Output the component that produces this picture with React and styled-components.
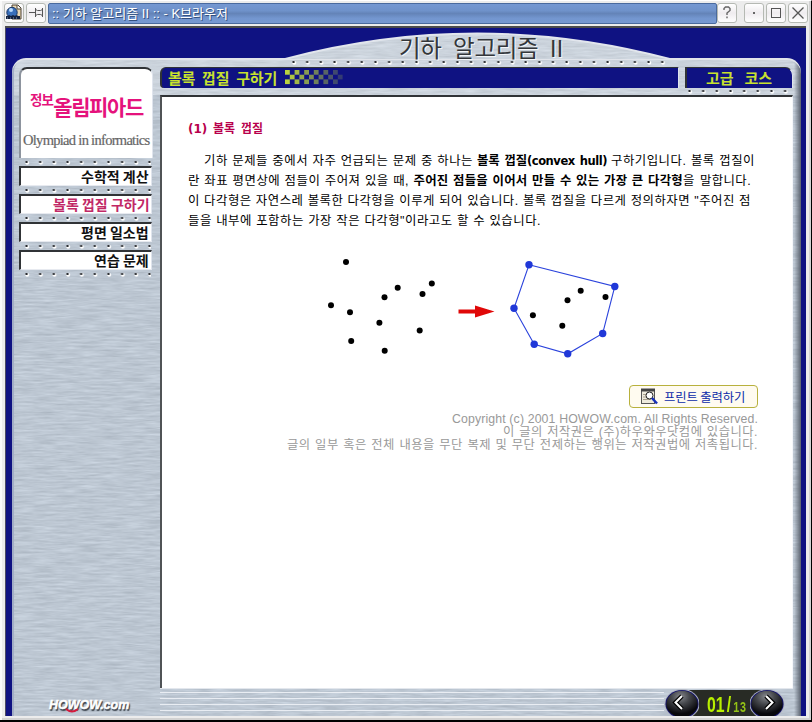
import React from "react";
import styled, { createGlobalStyle, css } from "styled-components";

const NAVY = "#0f1282";
const METAL_NOISE =
  "url(\"data:image/svg+xml,%3Csvg xmlns='http://www.w3.org/2000/svg' width='400' height='400'%3E%3Cfilter id='n' x='0' y='0' width='100%25' height='100%25' color-interpolation-filters='sRGB'%3E%3CfeTurbulence type='fractalNoise' baseFrequency='.045 .5' numOctaves='3' stitchTiles='stitch'/%3E%3CfeColorMatrix values='.16 0 0 0 .66 .16 0 0 0 .7 .16 0 0 0 .745 0 0 0 0 1'/%3E%3C/filter%3E%3Crect width='400' height='400' filter='url(%23n)'/%3E%3C/svg%3E\")";

const Global = createGlobalStyle`
  * { box-sizing: border-box; }
  body { margin: 0; font-family: "Liberation Sans", "Noto Sans CJK KR", sans-serif; }
`;

const Window = styled.div`
  width: 812px;
  height: 722px;
  overflow: hidden;
  display: grid;
  grid-template-rows: 25px 690px;
  background: #ececec;
  border-top: 1px solid #fff;
  border-right: 1px solid #000;
  border-bottom: 2px solid #000;
  box-shadow: inset 2px 0 #fafafa, inset -2px -2px #d2d2d2;
`;

const TitleBar = styled.header`
  display: flex;
  align-items: center;
  padding: 0 3px 2px 4px;
`;

const WinButton = styled.span`
  width: 20px;
  height: 20px;
  flex: none;
  margin-left: ${(p) => p.$gap || 0}px;
  border: 1px solid #b5b9b3;
  border-radius: 3px;
  background: linear-gradient(#fff, #efecef 50%, #fff);
  display: grid;
  place-items: center;
  svg { display: block; }
`;

const Caption = styled.div`
  width: 669px;
  height: 21px;
  margin: 1px 0 0 2px;
  padding-left: 3px;
  border: 1px solid #4a6a9e;
  border-radius: 2px;
  background: linear-gradient(#7598d2, #6f92ca 35%, #6484b8 50%, #7396cf 75%, #7799d2);
  color: #fff;
  font-size: 13px;
  line-height: 19px;
  text-shadow: 1px 1px #33507f;
`;

const Line = styled.div`
  width: ${(p) => p.$w}px;
  letter-spacing: ${(p) => p.$ls || 0}px;
  white-space: nowrap;
  text-align: justify;
  text-align-last: justify;
`;

const Page = styled.div`
  margin-left: 5px;
  width: 801px;
  height: 690px;
  border-top: 2px solid #4c4c4c;
  border-left: 1px solid #4c4c60;
  background: ${NAVY};
  display: flex;
  flex-direction: column;
  overflow: hidden;
`;

const Dome = styled.div`
  height: 30px;
  flex: none;
  padding-left: 279px;
  display: flex;
  position: relative;
`;
const DomeShape = styled.div`
  width: 385px;
  height: 31px;
  flex: none;
  background: linear-gradient(#ffffff38, #ffffff38), ${METAL_NOISE};
  clip-path: path("M0 31 Q192 -20 385 31 Z");
`;
const DomeEdge = styled.svg`
  position: absolute;
  left: 279px;
  top: 0;
`;
const DomeTitle = styled.div`
  position: absolute;
  z-index: 1;
  left: 393px;
  top: 2px;
  font: 400 23.5px/34px "Noto Sans CJK KR", sans-serif;
  color: #33363a;
  text-shadow: 1px 1px #f4f6f8;
`;

const Frame = styled.main`
  margin-left: 6px;
  width: 789px;
  flex: 1;
  border-radius: 14px 14px 0 0;
  background:
    linear-gradient(90deg, #8e98a500 782px, #59616e 789px),
    linear-gradient(#ffffff38, #ffffff38) 0 0 / 100% 37px no-repeat,
    ${METAL_NOISE};
  box-shadow: inset 0 2px #e1e4ea, inset 2px 0 #a3aec6;
  padding: 9px 7px 0 7px;
  display: grid;
  grid-template-columns: 134px 633px;
  column-gap: 7px;
`;

const inset = css`
  border-top: 2px solid #303336;
  border-left: 2px solid #303336;
  border-right: 1px solid #dfe4ed;
  border-bottom: 1px solid #e7eaf0;
`;

const Sidebar = styled.aside`
  display: flex;
  flex-direction: column;
`;

const LogoBox = styled.div`
  height: 91px;
  border-top: 2px solid #303336;
  border-left: 2px solid #8d949e;
  border-right: 1px solid #dfe4ed;
  border-radius: 8px 8px 0 0;
  background: #fff;
  padding: 18px 0 0 3px;
  display: flex;
  flex-direction: column;
`;
const LogoTop = styled.div`
  height: 42px;
  padding-left: 6px;
  display: flex;
  color: #e5127c;
  font-family: "Noto Sans CJK KR", sans-serif;
  font-weight: 700;
  white-space: nowrap;
`;
const LogoSmall = styled.span`
  font-size: 13.5px;
  line-height: 25px;
  letter-spacing: -0.8px;
`;
const LogoBig = styled.span`
  font-size: 21px;
  line-height: 39px;
  letter-spacing: -1.4px;
`;
const LogoSub = styled.div`
  margin-left: -1px;
  font: 14.5px/22px "Liberation Serif", serif;
  color: #666;
  letter-spacing: -0.7px;
  -webkit-text-stroke: 0.2px #666;
  white-space: nowrap;
`;

const Rivets = styled.div`
  height: ${(p) => p.$h || 8}px;
  margin-left: ${(p) => p.$left || 0}px;
  width: ${(p) => p.$w}px;
  background:
    radial-gradient(circle at 1.5px 1px, #26292e 0, #26292e 0.8px, #26292e00 1.5px) 0 ${(p) => p.$y || 3}px / 13.67px 5px repeat-x,
    radial-gradient(circle at 2.2px 1.8px, #fff 0, #fff 1.4px, #fff0 2.4px) 0 ${(p) => p.$y || 3}px / 13.67px 5px repeat-x;
`;
const DomeRivets = styled(Rivets)`
  position: absolute;
  left: 286px;
  top: 30px;
  z-index: 1;
`;

const NavItem = styled.a`
  height: 20px;
  width: 133px;
  ${inset}
  background: #fff;
  color: ${(p) => (p.$active ? "#c12866" : "#111")};
  font: 700 14px/16px "Noto Sans CJK KR", sans-serif;
  padding-right: 4px;
  display: flex;
  justify-content: flex-end;
`;

const Main = styled.section`
  display: grid;
  grid-template-rows: 21px 7px 593px 28px;
`;

const Tabs = styled.div`
  display: grid;
  grid-template-columns: 519px 108px;
  column-gap: 6px;
`;
const Tab = styled.div`
  background: ${NAVY};
  border-top: 1px solid #303336;
  border-left: 2px solid #303336;
  border-right: 1px solid #dfe4ed;
  border-radius: ${(p) => (p.$end ? "0 8px 0 0" : "6px 0 0 4px")};
  color: #c8e22e;
  font: 700 15px/17px "Noto Sans CJK KR", sans-serif;
  display: flex;
  align-items: center;
  padding: 0 0 2px ${(p) => (p.$end ? 19 : 6)}px;
  white-space: nowrap;
`;
const Checker = styled.svg`
  margin: 1px 0 0 8px;
`;

const Content = styled.article`
  background: #fff;
  border-top: 2px solid #303336;
  border-left: 2px solid #505356;
  border-right: 1px solid #f4f6fa;
  padding: 22px 34px 0 26px;
  font: 12.4px/20px "Liberation Sans", "Noto Sans CJK KR", sans-serif;
  color: #000;
  display: flex;
  flex-direction: column;
`;
const Heading = styled.h1`
  margin: 0 0 12px;
  font: 700 12px/20px "DejaVu Sans", "Noto Sans CJK KR", sans-serif;
  color: #b8004c;
`;
const Para = styled.div`
  display: flex;
  flex-direction: column;
`;
const Row = styled.div`
  display: flex;
  gap: ${(p) => p.$gap || 0}px;
  padding-left: ${(p) => p.$indent || 0}px;
  height: 20px;
`;
const BoldLine = styled(Line)`
  font-weight: 700;
`;
const Latin = styled.span`
  font: 700 11.5px/20px "DejaVu Sans", sans-serif;
  letter-spacing: -0.45px;
`;
const Figure = styled.svg`
  margin: 16px 0 0 130px;
  flex: none;
`;
const PrintButton = styled.button`
  align-self: flex-end;
  margin-top: 23px;
  width: 129px;
  height: 23px;
  flex: none;
  border: 1px solid #b8b13d;
  border-radius: 4px;
  background: #fffbf0;
  color: #0a2aa8;
  padding: 0 0 0 11px;
  display: flex;
  align-items: center;
  gap: 6px;
  font: 12.3px/20px "Noto Sans CJK KR", sans-serif;
`;
const Legal = styled.footer`
  align-self: flex-end;
  margin-top: 5px;
  display: flex;
  flex-direction: column;
  align-items: flex-end;
  color: #999;
  font: 12.3px/12.8px "Liberation Sans", "Noto Sans CJK KR", sans-serif;
`;

const Brand = styled.div`
  margin: auto 0 3px 30px;
  position: relative;
  color: #fff;
  font: italic 700 12.5px/16px "Liberation Sans", sans-serif;
  letter-spacing: 0;
  -webkit-text-stroke: 0.5px #fff;
  text-shadow: 1px 1px 1px #3e4650, 1px 2px 1px #3e4650;
  white-space: nowrap;
`;
const Smile = styled.svg`
  position: absolute;
  left: 16px;
  top: 11px;
`;
const Bottom = styled.div`
  display: flex;
  border-top: 1px solid #e3e7ed;
`;
const Grooves = styled.div`
  width: 504px;
  margin-top: 3px;
  background: repeating-linear-gradient(#e9edf3 0 1px, transparent 1px 6px);
`;
const Pager = styled.div`
  display: grid;
  grid-template-columns: 35px 51px 36px;
`;
const Counter = styled.div`
  background: #282b25;
  margin-top: 1px;
  padding-left: 8px;
  display: flex;
  color: #b8f000;
  font: 700 22px/29px "Liberation Sans", sans-serif;
`;
const Condensed = styled.span`
  display: block;
  width: 42px;
  flex: none;
  transform: scaleX(0.72);
  transform-origin: 0 0;
  white-space: nowrap;
`;
const Slash = styled.span`
  margin-left: 3px;
`;
const Total = styled.span`
  margin-left: 3px;
  font-size: 15px;
  color: #93c116;
  letter-spacing: 0.8px;
`;
const Round = styled.svg`
  display: block;
`;

const NAV = [["수학적 계산", 66], ["볼록 껍질 구하기", 94], ["평면 일소법", 66], ["연습 문제", 53]];
const CLOUD = [[346, 262], [331, 305.3], [350, 312.3], [384.5, 297.3], [397.7, 287.7], [422.5, 294], [431.8, 283.5], [379.4, 322.7], [419.7, 330.4], [351.2, 341], [384.7, 350.8]];
const INNER = [[532.9, 315.3], [567.5, 300.3], [580.7, 290.7], [605.5, 297], [562.3, 325.7]];
const HULL = [[529, 264.8], [614.8, 286.5], [602.7, 333.5], [567.7, 353.8], [534.2, 344.2], [514, 308.3]];

function Arrow({ dir }) {
  const id = `ball${dir}`;
  const cx = dir === "l" ? 18 : 17;
  const d = dir === "l" ? "M18 7L11.5 13.5L18 20" : "M16 7L22.5 13.5L16 20";
  return (
    <Round width="36" height="28" viewBox="0 0 36 28">
      <defs>
        <radialGradient id={id} cx="45%" cy="22%" r="65%">
          <stop offset="0" stopColor="#85878d" />
          <stop offset=".45" stopColor="#44464b" />
          <stop offset="1" stopColor="#08080c" />
        </radialGradient>
      </defs>
      <rect x={dir === "l" ? 18 : 0} y="1" width="18" height="27" fill="#282b25" />
      <ellipse cx={cx} cy="15" rx="17.6" ry="15" fill="#b5bac4" />
      <ellipse cx={cx} cy="15" rx="16.6" ry="14" fill="#15156b" />
      <ellipse cx={cx} cy="15" rx="15.7" ry="13.2" fill={`url(#${id})`} />
      <path d={d} fill="none" stroke="#000" strokeWidth="4.5" />
      <path d={d} fill="none" stroke="#fff" strokeWidth="2" />
    </Round>
  );
}

export default function App() {
  return (
    <>
      <Global />
      <Window>
        <TitleBar>
          <WinButton>
            <svg width="18" height="18" viewBox="0 0 18 18">
              <path d="M7 1h6l3 3v11H7z" fill="#e9d7b4" stroke="#4b4031" />
              <path d="M12 1v4h4" fill="#fff" stroke="#4b4031" />
              <circle cx="7" cy="8.5" r="5.2" fill="#3970bb" stroke="#183663" />
              <circle cx="6" cy="6" r="2" fill="#b9d9fb" />
              <path d="M1 12l2 0 1-1 2 1 2-1 2 1 2-1 1 1 2 0v3H1z" fill="#14233f" />
              <path d="M2 14h12" stroke="#8fa0bc" strokeDasharray="1 2" />
            </svg>
          </WinButton>
          <WinButton $gap={2}>
            <svg width="16" height="14" viewBox="0 0 16 14" fill="none" stroke="#555">
              <path d="M1 6.5h6M7.5 2v9M7.5 3.5l2 1h3l2-1M7.5 9.500l2-1h3l2 1M14.500 2v9" />
            </svg>
          </WinButton>
          <Caption><Line $w={175} $ls={0}>:: 기하 알고리즘 II :: - K브라우저</Line></Caption>
          <WinButton $gap={0}>
            <svg width="10" height="13" viewBox="0 0 10 13" fill="none" stroke="#666" strokeWidth="1.4">
              <path d="M2 4V2.500L3.500 1h3L8 2.500v2L5 7v2M5 10.500v1.800" />
            </svg>
          </WinButton>
          <WinButton $gap={7}><svg width="4" height="4"><rect x="1" y="1" width="2" height="2" fill="#666" /></svg></WinButton>
          <WinButton $gap={2}><svg width="12" height="12"><rect x="1.500" y="1.500" width="9" height="9" fill="none" stroke="#555" /></svg></WinButton>
          <WinButton $gap={2}><svg width="14" height="14"><path d="M1.500 1.500l11 11M12.500 1.500l-11 11" stroke="#555" strokeWidth="1.300" /></svg></WinButton>
        </TitleBar>
        <Page>
          <Dome>
            <DomeShape />
            <DomeEdge width="385" height="31"><path d="M0 31Q192 -20 385 31" fill="none" stroke="#e2e6ed" strokeWidth="2" /></DomeEdge>
            <DomeTitle><Line $w={164} $ls={-0.3}>기하 알고리즘 II</Line></DomeTitle>
            <DomeRivets $w={378} $y={3} />
          </Dome>
          <Frame>
            <Sidebar>
              <LogoBox>
                <LogoTop><LogoSmall>정보</LogoSmall><LogoBig>올림피아드</LogoBig></LogoTop>
                <LogoSub>Olympiad in informatics</LogoSub>
              </LogoBox>
              {NAV.map(([t, w], i) => (
                <React.Fragment key={t}>
                  <Rivets $w={126} $left={6} />
                  <NavItem $active={i === 1}><Line $w={w}>{t}</Line></NavItem>
                </React.Fragment>
              ))}
              <Rivets $w={126} $left={6} />
              <Brand>
                HOWOW.com
                <Smile width="14" height="6"><path d="M1 1q6 5 12 0" fill="none" stroke="#d41a3c" strokeWidth="2" /></Smile>
              </Brand>
            </Sidebar>
            <Main>
              <Tabs>
                <Tab>
                  <Line $w={109} $ls={-0.2}>볼록 껍질 구하기</Line>
                  <Checker width="60" height="15">
                    {Array.from({ length: 12 }, (_, c) => [0, 1, 2].map((r) => (c + r) % 2 === 0 && (
                      <rect key={`${c}${r}`} x={c * 4.8} y={r * 4.700} width="4.8" height="4.700" fill="#c4dd3b" opacity={0.95 - c * 0.068} />
                    )))}
                  </Checker>
                </Tab>
                <Tab $end><Line $w={66} $ls={0}>고급 코스</Line></Tab>
              </Tabs>
              <Rivets $h={7} $w={104} $left={528} $y={2} />
              <Content>
                <Heading><Line $w={75} $ls={0}>(1) 볼록 껍질</Line></Heading>
                <Para>
                  <Row $indent={16} $gap={4}>
                    <Line $w={269} $ls={0.5}>기하 문제들 중에서 자주 언급되는 문제 중 하나는</Line>
                    <BoldLine $w={130} $ls={-0.1}>볼록 껍질<Latin>(convex hull)</Latin></BoldLine>
                    <Line $w={144} $ls={0.5}>구하기입니다. 볼록 껍질이</Line>
                  </Row>
                  <Row>
                    <Line $w={221} $ls={0.5}>란 좌표 평면상에 점들이 주어져 있을 때,</Line>
                    <BoldLine $w={274} $ls={0.25}>&nbsp;주어진 점들을 이어서 만들 수 있는 가장 큰 다각형</BoldLine>
                    <Line $w={68} $ls={0.4}>을 말합니다.</Line>
                  </Row>
                  <Row><Line $w={563} $ls={0.5}>이 다각형은 자연스레 볼록한 다각형을 이루게 되어 있습니다. 볼록 껍질을 다르게 정의하자면 "주어진 점</Line></Row>
                  <Row><Line $w={353} $ls={0.5}>들을 내부에 포함하는 가장 작은 다각형"이라고도 할 수 있습니다.</Line></Row>
                </Para>
                <Figure width="310" height="115" viewBox="318 247 310 115">
                  {CLOUD.map(([x, y]) => <circle key={`${x}`} cx={x} cy={y} r="3" />)}
                  <path d="M458.500 309.500H475V305.500L494.500 311.500L475 317.500V313.500H458.500Z" fill="#e00808" />
                  <polygon points={HULL.map((p) => p.join(",")).join(" ")} fill="none" stroke="#2b43dc" strokeWidth="1.100" />
                  {HULL.map(([x, y]) => <circle key={`${x}`} cx={x} cy={y} r="3.700" fill="#2038d8" />)}
                  {INNER.map(([x, y]) => <circle key={`${x}`} cx={x} cy={y} r="3" />)}
                </Figure>
                <PrintButton>
                  <svg width="17" height="17" viewBox="0 0 17 17">
                    <rect x=".5" y="1.500" width="13" height="14" fill="#eeeadd" stroke="#555" />
                    <path d="M0 2h14" stroke="#444" strokeWidth="3" />
                    <path d="M2 6.500h3M2 9h4M2 11.500h8" stroke="#aaa18e" />
                    <circle cx="8.500" cy="7.500" r="3.500" fill="#fff" stroke="#222" />
                    <path d="M11 10l5 5.500" stroke="#1630ba" strokeWidth="2.500" />
                  </svg>
                  <Line $w={80} $ls={-0.1}>프린트 출력하기</Line>
                </PrintButton>
                <Legal>
                  <Line $w={306} $ls={0.13}>Copyright (c) 2001 HOWOW.com. All Rights Reserved.</Line>
                  <Line $w={255} $ls={0.5}>이 글의 저작권은 (주)하우와우닷컴에 있습니다.</Line>
                  <Line $w={471} $ls={0.5}>글의 일부 혹은 전체 내용을 무단 복제 및 무단 전제하는 행위는 저작권법에 저촉됩니다.</Line>
                </Legal>
              </Content>
              <Bottom>
                <Grooves />
                <Pager>
                  <Arrow dir="l" />
                  <Counter><Condensed>01<Slash>/</Slash><Total>13</Total></Condensed></Counter>
                  <Arrow dir="r" />
                </Pager>
              </Bottom>
            </Main>
          </Frame>
        </Page>
      </Window>
    </>
  );
}
